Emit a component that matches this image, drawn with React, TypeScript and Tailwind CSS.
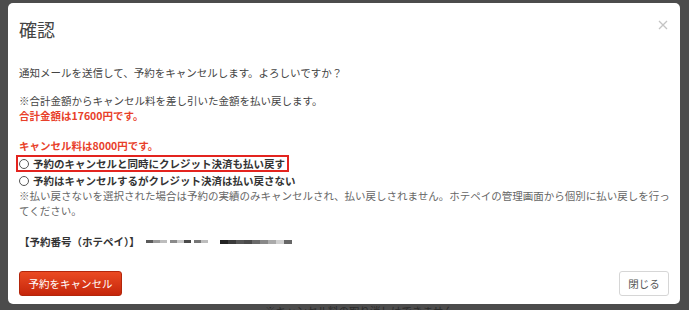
const jp = { fontFamily: '"Noto Sans CJK JP", "Noto Sans", sans-serif' };

function Radio() {
  return <span className="mr-[4px] inline-block h-[10px] w-[10px] flex-none rounded-full border border-[#555] bg-white" />;
}

function Masked() {
  // blurred reservation number
  const a = ['#5a5a5a', '#9a9a9a', '#bdbdbd', '#8a8a8a', '#c8c8c8', '#4a4a4a', '#777', '#bdbdbd'];
  const b = ['#222', '#3a3a3a', '#555', '#4a4a4a', '#6a6a6a', '#888', '#aaa', '#d0d0d0', '#666'];
  return (
    <div className="ml-[6px] flex items-center">
      <div className="flex items-center">
        {a.map((c, i) => (
          <span key={i} className="h-[3px] w-[7px]" style={{ background: c, marginRight: i % 3 === 2 ? 3 : 0 }} />
        ))}
      </div>
      <div className="ml-[12px] flex items-center">
        {b.map((c, i) => (
          <span key={i} className="h-[4px] w-[8px]" style={{ background: c }} />
        ))}
      </div>
    </div>
  );
}

export default function App() {
  return (
    <div className="relative h-[310px] w-[689px] overflow-hidden bg-[#4c4c4c]" style={jp}>
      <div className="ml-[8px] mt-[3px] flex h-[301px] w-[672px] flex-col rounded-[5px] bg-white px-[11px] text-[10.5px] text-[#333]">
        {/* header */}
        <div className="flex items-start justify-between pt-[15px]">
          <h4 className="text-[18px] leading-[22px] text-[#444]">確認</h4>
          <svg className="mr-[1px] mt-[2px]" width="10" height="10" viewBox="0 0 10 10">
            <path d="M1 1L9 9M9 1L1 9" stroke="#c4c4c4" strokeWidth="1.3" />
          </svg>
        </div>

        {/* body */}
        <div className="mt-[25px] flex flex-col leading-[15px]">
          <div className="text-[#444]">通知メールを送信して、予約をキャンセルします。よろしいですか？</div>
          <div className="mt-[13px] text-[#444]">※合計金額からキャンセル料を差し引いた金額を払い戻します。</div>
          <div className="font-bold text-[#e8402a]">合計金額は17600円です。</div>
          <div className="mt-[15px] font-bold text-[#e8402a]">キャンセル料は8000円です。</div>
          <div className="-ml-[3px] mt-[2px] flex h-[17px] w-[273px] items-center border-2 border-[#e3241f] pl-[1px] font-bold leading-[13px]">
            <Radio />
            予約のキャンセルと同時にクレジット決済も払い戻す
          </div>
          <div className="mt-[1px] flex items-center font-bold">
            <Radio />
            予約はキャンセルするがクレジット決済は払い戻さない
          </div>
          <div className="whitespace-nowrap text-[#666]">
            ※払い戻さないを選択された場合は予約の実績のみキャンセルされ、払い戻しされません。ホテペイの管理画面から個別に払い戻しを行っ
            <br />
            てください。
          </div>
          <div className="mt-[16px] flex items-center">
            <span className="font-bold">【予約番号（ホテペイ）】</span>
            <Masked />
          </div>
        </div>

        {/* footer */}
        <div className="mt-[22px] flex items-center justify-between">
          <button className="h-[25px] w-[103px] rounded-[3px] border border-[#b3260b] bg-gradient-to-b from-[#eb4a22] to-[#c5250a] text-[10.5px] text-white">
            予約をキャンセル
          </button>
          <button className="h-[25px] w-[50px] rounded-[3px] border border-[#d6d6d6] bg-white text-[10.5px] text-[#555]">
            閉じる
          </button>
        </div>
      </div>
      <div className="ml-[265px] mt-[1px] text-[10.5px] leading-[12px] text-[#2a2a2a]">※キャンセル料の取り消しはできません</div>
    </div>
  );
}
